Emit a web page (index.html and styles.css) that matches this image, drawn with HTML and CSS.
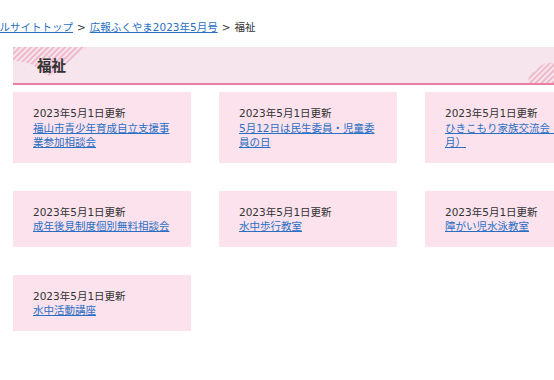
FILE: index.html
```html
<!DOCTYPE html>
<html lang="ja">
<head>
<meta charset="utf-8">
<link rel="stylesheet" href="styles.css">
</head>
<body>
<div class="page">
  <nav class="breadcrumb">
    <a href="#">ポータルサイトトップ</a><span class="sep">&gt;</span><a href="#">広報ふくやま2023年5月号</a><span class="sep">&gt;</span><span class="current">福祉</span>
  </nav>
  <h2 class="heading">
    <svg class="deco deco-left" width="74" height="30" viewBox="0 0 74 30">
      <defs>
        <pattern id="stL" width="4" height="4" patternUnits="userSpaceOnUse" patternTransform="rotate(45)">
          <rect width="2" height="4" fill="#efb9cc"/>
        </pattern>
      </defs>
      <path d="M0 0 H74 L40 28 Q36 30 32 27 L20 18 Q12 14 0 14 Z" fill="url(#stL)"/>
    </svg>
    <span class="heading-text">福祉</span>
    <svg class="deco deco-right" width="75" height="22" viewBox="0 0 75 22">
      <defs>
        <pattern id="stR" width="4" height="4" patternUnits="userSpaceOnUse" patternTransform="rotate(45)">
          <rect width="2" height="4" fill="#efb9cc"/>
        </pattern>
      </defs>
      <path d="M0 22 Q0 12 8 10 Q12 2 22 2 Q30 0 36 4 L75 4 V22 Z" fill="url(#stR)"/>
    </svg>
  </h2>
  <div class="grid">
    <div class="card"><p class="date">2023年5月1日更新</p><a href="#">福山市青少年育成自立支援事業参加相談会</a></div>
    <div class="card"><p class="date">2023年5月1日更新</p><a href="#">5月12日は民生委員・児童委員の日</a></div>
    <div class="card"><p class="date">2023年5月1日更新</p><a href="#">ひきこもり家族交流会（5<br>月）</a></div>
    <div class="card"><p class="date">2023年5月1日更新</p><a href="#">成年後見制度個別無料相談会</a></div>
    <div class="card"><p class="date">2023年5月1日更新</p><a href="#">水中歩行教室</a></div>
    <div class="card"><p class="date">2023年5月1日更新</p><a href="#">障がい児水泳教室</a></div>
    <div class="card"><p class="date">2023年5月1日更新</p><a href="#">水中活動講座</a></div>
  </div>
</div>
</body>
</html>
```
FILE: styles.css
```css
html, body {
  margin: 0;
  padding: 0;
  background: #fff;
}
body {
  font-family: "DejaVu Sans", "Noto Sans CJK JP", sans-serif;
  font-size: 10.5px;
  color: #333;
  overflow: hidden;
}
.page {
  padding: 20px 0 0 13px;
  width: 600px;
}
.breadcrumb {
  margin-left: -45px;
  height: 14px;
  line-height: 14px;
  white-space: nowrap;
  margin-bottom: 13px;
}
a {
  color: #2a6fc4;
  text-decoration: underline;
}
.sep {
  margin: 0 4px;
  color: #333;
}
.current {
  color: #333;
}
.heading {
  position: relative;
  margin: 0;
  width: 590px;
  height: 36px;
  box-sizing: content-box;
  background: #f6e5ec;
  border-bottom: 2px solid #ea7ea5;
  font-family: "Noto Sans CJK JP", sans-serif;
  font-size: 14.5px;
  font-weight: bold;
  line-height: 36px;
  color: #333;
}
.heading-text {
  position: relative;
  padding-left: 24px;
}
.deco {
  position: absolute;
}
.deco-left {
  left: 0;
  top: 0;
}
.deco-right {
  right: 0;
  bottom: 0;
}
.grid {
  margin-top: 7px;
  display: grid;
  grid-template-columns: repeat(3, 178px);
  column-gap: 28px;
  row-gap: 28px;
  align-items: start;
}
.card {
  background: #fbe2ed;
  padding: 14px 20px 13px;
  line-height: 14.5px;
}
.date {
  margin: 0;
}
```
